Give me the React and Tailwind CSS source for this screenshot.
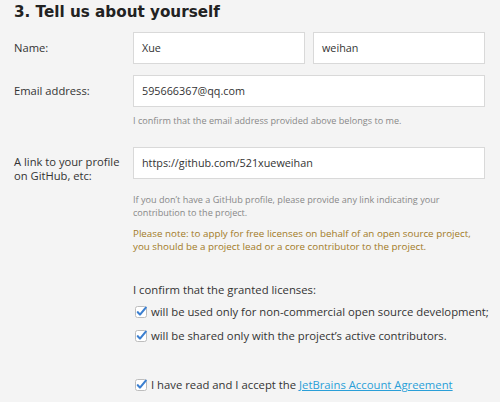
import React from 'react';

const Check = () => (
    <svg width="12" height="12" viewBox="0 0 12 12" className="shrink-0">
        <rect x="0.5" y="0.5" width="11" height="11" rx="2" fill="#fff" stroke="#bdbdbd" />
        <path d="M2.8 6.2 L5 8.6 L10.8 1.6" fill="none" stroke="#3b7fd0" strokeWidth="2.1" strokeLinecap="round" strokeLinejoin="round" />
    </svg>
);

const Field = ({ value, className = '' }) => (
    <div className={`h-[32px] bg-white border border-[#d9d9d9] flex items-center px-[8px] text-[10.8px] text-[#333] ${className}`}>
        {value}
    </div>
);

const App = () => {
    return (
        <div className="w-[500px] h-[402px] overflow-hidden bg-[#f4f4f4] text-[#333] pl-[14px]" style={{ fontFamily: '"Open Sans", sans-serif' }}>
            <h2 className="text-[15.2px] font-bold leading-[22px] pt-[1px] text-[#222]" style={{ fontFamily: '"DejaVu Sans", sans-serif' }}>
                3. Tell us about yourself
            </h2>

            {/* Name */}
            <div className="flex items-center mt-[9px]">
                <div className="w-[119px] text-[11.2px]">Name:</div>
                <div className="flex gap-[8px]">
                    <Field value="Xue" className="w-[172px]" />
                    <Field value="weihan" className="w-[172px]" />
                </div>
            </div>

            {/* Email */}
            <div className="flex items-center mt-[11px]">
                <div className="w-[119px] text-[11.2px]">Email address:</div>
                <Field value="595666367@qq.com" className="w-[352px]" />
            </div>
            <p className="ml-[119px] mt-[7px] text-[9.1px] text-[#888] leading-[14px]">
                I confirm that the email address provided above belongs to me.
            </p>

            {/* GitHub */}
            <div className="flex items-start mt-[19px]">
                <div className="w-[119px] text-[11.2px] leading-[14px] pt-[8px]">
                    A link to your profile<br />on GitHub, etc:
                </div>
                <Field value="https://github.com/521xueweihan" className="w-[352px]" />
            </div>
            <p className="ml-[119px] mt-[10px] text-[9.1px] text-[#888] leading-[13px]">
                If you don’t have a GitHub profile, please provide any link indicating your<br />contribution to the project.
            </p>
            <p className="ml-[119px] mt-[8px] text-[9.8px] text-[#a27a25] leading-[13px]">
                Please note: to apply for free licenses on behalf of an open source project,<br />you should be a project lead or a core contributor to the project.
            </p>

            {/* Licenses */}
            <div className="ml-[119px] mt-[28px] text-[11.3px] leading-[18px]">
                <p>I confirm that the granted licenses:</p>
                <div className="flex items-center gap-[4px] mt-[4px] ml-[2px]">
                    <Check /><span>will be used only for non-commercial open source development;</span>
                </div>
                <div className="flex items-center gap-[4px] mt-[6px] ml-[2px]">
                    <Check /><span>will be shared only with the project’s active contributors.</span>
                </div>
                <div className="flex items-center gap-[4px] mt-[31px] ml-[2px]">
                    <Check />
                    <span>I have read and I accept the <a className="text-[#2a9fd8] underline">JetBrains Account Agreement</a></span>
                </div>
            </div>
        </div>
    );
};

export default App;
